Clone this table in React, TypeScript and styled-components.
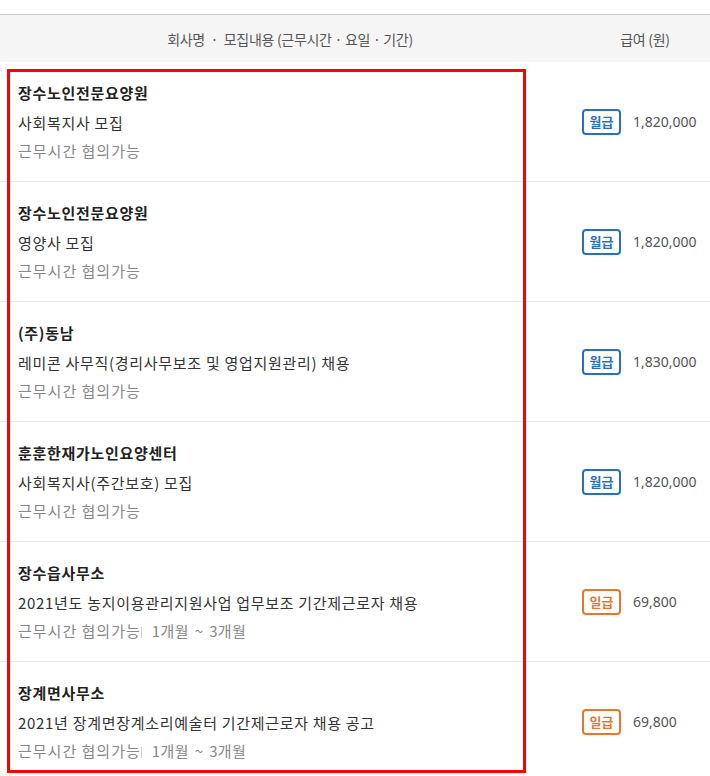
import styled, { createGlobalStyle } from "styled-components";

type PayType = "month" | "day";

interface Job {
  company: string;
  title: string;
  hours: string;
  period?: string;
  payType: PayType;
  amount: string;
}

const jobs: Job[] = [
  { company: "장수노인전문요양원", title: "사회복지사 모집", hours: "근무시간 협의가능", payType: "month", amount: "1,820,000" },
  { company: "장수노인전문요양원", title: "영양사 모집", hours: "근무시간 협의가능", payType: "month", amount: "1,820,000" },
  { company: "(주)동남", title: "레미콘 사무직(경리사무보조 및 영업지원관리) 채용", hours: "근무시간 협의가능", payType: "month", amount: "1,830,000" },
  { company: "훈훈한재가노인요양센터", title: "사회복지사(주간보호) 모집", hours: "근무시간 협의가능", payType: "month", amount: "1,820,000" },
  { company: "장수읍사무소", title: "2021년도 농지이용관리지원사업 업무보조 기간제근로자 채용", hours: "근무시간 협의가능", period: "1개월 ~ 3개월", payType: "day", amount: "69,800" },
  { company: "장계면사무소", title: "2021년 장계면장계소리예술터 기간제근로자 채용 공고", hours: "근무시간 협의가능", period: "1개월 ~ 3개월", payType: "day", amount: "69,800" },
];

const GlobalStyle = createGlobalStyle`
  body {
    margin: 0;
    background: #fff;
    font-family: "Noto Sans CJK KR", "Noto Sans", sans-serif;
  }
`;

export default function App() {
  return (
    <Page>
      <GlobalStyle />
      <Table>
        <HeadRow>
          <HeadCell>회사명 &nbsp;·&nbsp; 모집내용 (근무시간 · 요일 · 기간)</HeadCell>
          <HeadCell>급여 (원)</HeadCell>
        </HeadRow>
        {jobs.map((job, i) => (
          <Row key={i}>
            <Info>
              <Company>{job.company}</Company>
              <JobTitle>{job.title}</JobTitle>
              <Meta>
                {job.hours}
                {job.period && (
                  <>
                    <Divider />
                    <Period>{job.period}</Period>
                  </>
                )}
              </Meta>
            </Info>
            <Pay>
              <Badge payType={job.payType}>{job.payType === "month" ? "월급" : "일급"}</Badge>
              <Amount>{job.amount}</Amount>
            </Pay>
          </Row>
        ))}
        <Highlight />
      </Table>
    </Page>
  );
}

const Page = styled.div`
  width: 710px;
  height: 776px;
  overflow: hidden;
  padding-top: 14px;
  box-sizing: border-box;
`;

const Table = styled.div`
  position: relative;
  border-top: 1px solid #cfcfcf;
`;

const HeadRow = styled.div`
  display: grid;
  grid-template-columns: 580px 1fr;
  height: 47px;
  align-items: center;
  background: #f5f5f5;
`;

const HeadCell = styled.div`
  text-align: center;
  font-size: 14px;
  color: #555;
  letter-spacing: -0.3px;
`;

const Row = styled.div`
  display: grid;
  grid-template-columns: 570px 1fr;
  height: 120px;
  border-bottom: 1px solid #ebebeb;
  box-sizing: border-box;
`;

const Info = styled.div`
  display: flex;
  flex-direction: column;
  padding: 19px 0 0 18px;
`;

const Company = styled.div`
  font-size: 15px;
  font-weight: 700;
  color: #222;
  line-height: 24px;
  letter-spacing: 0.7px;
`;

const JobTitle = styled.div`
  font-size: 15px;
  color: #333;
  line-height: 24px;
  margin-top: 6px;
  letter-spacing: 0.7px;
`;

const Meta = styled.div`
  display: flex;
  align-items: center;
  font-size: 15px;
  color: #888;
  line-height: 24px;
  margin-top: 4px;
  letter-spacing: 1px;
`;

const Divider = styled.span`
  display: inline-block;
  width: 1px;
  height: 11px;
  margin: 2px 10px 0 0;
  background: #d4d4d4;
`;

const Period = styled.span`
  letter-spacing: 0.4px;
  word-spacing: 2px;
`;

const Pay = styled.div`
  display: flex;
  align-items: center;
  padding-left: 12px;
  gap: 12px;
`;

const Badge = styled.span<{ payType: PayType }>`
  display: inline-flex;
  align-items: center;
  justify-content: center;
  width: 39px;
  height: 26px;
  box-sizing: border-box;
  border: 2px solid ${(p) => (p.payType === "month" ? "#2b6fb8" : "#e8772e")};
  border-radius: 4px;
  color: ${(p) => (p.payType === "month" ? "#2b6fb8" : "#e8772e")};
  font-size: 13px;
  font-weight: 700;
`;

const Amount = styled.span`
  font-family: "Noto Sans", sans-serif;
  font-size: 14px;
  color: #555;
`;

const Highlight = styled.div`
  position: absolute;
  left: 7px;
  top: 54px;
  width: 519px;
  height: 704px;
  border: 3px solid #ff0000;
  box-sizing: border-box;
  pointer-events: none;
`;
